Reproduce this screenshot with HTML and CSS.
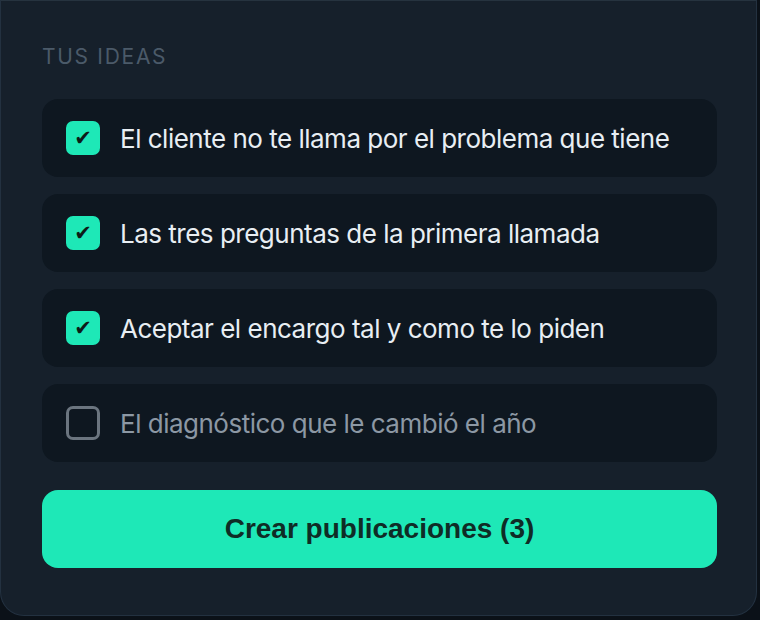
FILE: index.html
```html
<!DOCTYPE html>
<html lang="es">

<head>
    <meta charset="UTF-8">
    <meta name="viewport" content="width=device-width, initial-scale=1.0">
    <title>Tus ideas</title>
    <link rel="stylesheet" href="styles.css">
</head>

<body>
    <main class="ideas">
        <h2 class="ideas__title">TUS IDEAS</h2>
        <ul class="ideas__list">
            <li class="idea is-checked"><span class="idea__box">✔</span><span class="idea__text">El cliente no te llama por el problema que tiene</span></li>
            <li class="idea is-checked"><span class="idea__box">✔</span><span class="idea__text">Las tres preguntas de la primera llamada</span></li>
            <li class="idea is-checked"><span class="idea__box">✔</span><span class="idea__text">Aceptar el encargo tal y como te lo piden</span></li>
            <li class="idea"><span class="idea__box"></span><span class="idea__text">El diagnóstico que le cambió el año</span></li>
        </ul>
        <button class="ideas__btn">Crear publicaciones (3)</button>
    </main>
</body>

</html>
```

FILE: styles.css
```css
* {
    margin: 0;
    padding: 0;
    box-sizing: border-box;
}

body {
    width: 100%;
    height: 100vh;
    overflow: hidden;
    background-color: #0b1118;
    font-family: Inter, "Noto Sans", sans-serif;
}

/* card */
.ideas {
    width: 757px;
    height: 616px;
    padding: 41px 39px 0 41px;
    background-color: #16202b;
    border: 1px solid #233140;
    border-top-color: #26333f;
    border-radius: 0 0 24px 24px;
}

.ideas__title {
    font-size: 21px;
    font-weight: 400;
    letter-spacing: 1.7px;
    line-height: 29px;
    color: #4b5a69;
    margin-bottom: 28px;
}

.ideas__list {
    list-style: none;
    display: flex;
    flex-direction: column;
    gap: 17px;
}

.idea {
    display: flex;
    align-items: center;
    gap: 20px;
    height: 78px;
    padding: 0 24px;
    background-color: #0e1720;
    border-radius: 16px;
}

.idea__box {
    display: flex;
    align-items: center;
    justify-content: center;
    flex: none;
    width: 34px;
    height: 34px;
    border: 3px solid #6b757f;
    border-radius: 7px;
    font-family: "DejaVu Sans", sans-serif;
    font-size: 21px;
    line-height: 1;
    color: #0d1b18;
}

.is-checked .idea__box {
    background-color: #1ee8b7;
    border-color: #1ee8b7;
}

.idea__text {
    font-size: 26px;
    color: #e8eef3;
    letter-spacing: -0.5px;
}

.idea:not(.is-checked) .idea__text {
    color: #8c98a4;
}

.ideas__btn {
    display: block;
    width: 100%;
    height: 78px;
    margin-top: 28px;
    border: none;
    border-radius: 16px;
    background-color: #1ee8b7;
    font-family: "Liberation Sans", Arial, sans-serif;
    font-size: 28px;
    font-weight: 700;
    color: #0f2c26;
}
```
